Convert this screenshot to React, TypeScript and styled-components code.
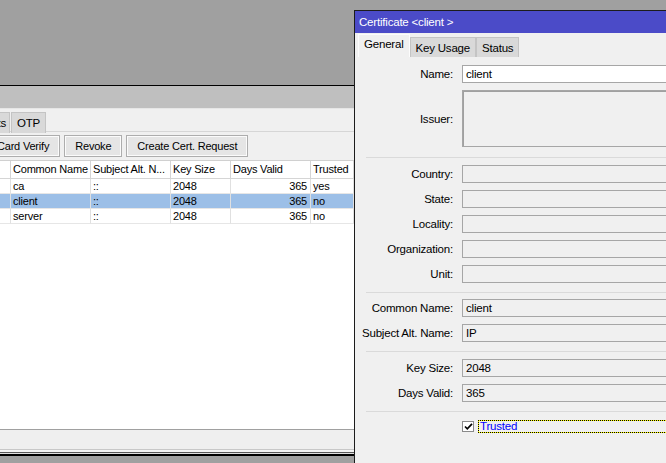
import styled, { createGlobalStyle } from "styled-components";

const GlobalStyle = createGlobalStyle`
  html, body {
    margin: 0;
    padding: 0;
  }
  body {
    background: #a0a0a0;
    font-family: "Liberation Sans", Arial, sans-serif;
    font-size: 11px;
    letter-spacing: -0.2px;
    color: #000;
  }
`;

const rows = [
  { name: "ca", alt: "::", size: "2048", days: "365", trusted: "yes" },
  { name: "client", alt: "::", size: "2048", days: "365", trusted: "no", selected: true },
  { name: "server", alt: "::", size: "2048", days: "365", trusted: "no" },
];

const columns = ["", "Common Name", "Subject Alt. N...", "Key Size", "Days Valid", "Trusted"];

export default function App() {
  return (
    <>
      <GlobalStyle />
      <Desktop>
        <BackWindow>
          <TitleBand />
          <TabStrip>
            <BackTab $cut>SCEP RA Requests</BackTab>
            <BackTab>OTP</BackTab>
          </TabStrip>
          <Toolbar>
            <Button $cut>Card Verify</Button>
            <Button>Revoke</Button>
            <Button>Create Cert. Request</Button>
          </Toolbar>
          <TableArea>
            <Grid>
              {columns.map((c, i) => (
                <HeadCell key={i}>{c}</HeadCell>
              ))}
              {rows.map((r) => (
                <Row key={r.name} $selected={!!r.selected}>
                  <Cell />
                  <Cell>{r.name}</Cell>
                  <Cell>{r.alt}</Cell>
                  <Cell>{r.size}</Cell>
                  <Cell $right>{r.days}</Cell>
                  <Cell>{r.trusted}</Cell>
                </Row>
              ))}
            </Grid>
          </TableArea>
          <StatusBar />
          <FrameBottom />
        </BackWindow>

        <Dialog>
          <DialogTitle>Certificate &lt;client &gt;</DialogTitle>
          <DialogTabs>
            <DialogTab $active>General</DialogTab>
            <DialogTab>Key Usage</DialogTab>
            <DialogTab>Status</DialogTab>
          </DialogTabs>
          <Body>
            <Section $pt={8} $pb={10}>
              <FormRow>
                <Label>Name:</Label>
                <Field $white>client</Field>
              </FormRow>
              <FormRow>
                <Label>Issuer:</Label>
                <AreaField />
              </FormRow>
            </Section>
            <Separator />
            <Section $pt={7} $pb={9}>
              {["Country:", "State:", "Locality:", "Organization:", "Unit:"].map((l) => (
                <FormRow key={l}>
                  <Label>{l}</Label>
                  <Field />
                </FormRow>
              ))}
            </Section>
            <Separator />
            <Section $pt={6} $pb={9}>
              <FormRow>
                <Label>Common Name:</Label>
                <Field>client</Field>
              </FormRow>
              <FormRow>
                <Label>Subject Alt. Name:</Label>
                <Field>IP</Field>
              </FormRow>
            </Section>
            <Separator />
            <Section $pt={7} $pb={9}>
              <FormRow>
                <Label>Key Size:</Label>
                <Field>2048</Field>
              </FormRow>
              <FormRow>
                <Label>Days Valid:</Label>
                <Field>365</Field>
              </FormRow>
            </Section>
            <Separator />
            <Section $pt={8} $pb={9}>
              <FormRow>
                <span />
                <CheckLine>
                  <CheckBox>
                    <svg width="9" height="9" viewBox="0 0 9 9">
                      <path d="M1 4.5 L3.3 6.8 L8 1.8" fill="none" stroke="#000" strokeWidth="1.7" />
                    </svg>
                  </CheckBox>
                  <FocusLabel>Trusted</FocusLabel>
                </CheckLine>
              </FormRow>
            </Section>
          </Body>
        </Dialog>
      </Desktop>
    </>
  );
}

const Desktop = styled.div`
  position: relative;
  width: 666px;
  height: 463px;
  overflow: hidden;
  background: #a0a0a0;
`;

/* windows on the desktop */
const BackWindow = styled.div`
  position: absolute;
  left: 0;
  top: 85px;
  width: 354px;
  height: 371px;
  display: flex;
  flex-direction: column;
  background: #f0f0f0;
  border-top: 1px solid #000;
  box-sizing: border-box;
  overflow: hidden;
`;

const TitleBand = styled.div`
  height: 22px;
  flex-shrink: 0;
  background: #bfbfbf;
`;

const TabStrip = styled.div`
  height: 24px;
  flex-shrink: 0;
  box-sizing: border-box;
  padding-top: 3px;
  display: flex;
  gap: 1px;
  border-top: 1px solid #e6e6e6;
  border-bottom: 1px solid #d6d6d6;
`;

const BackTab = styled.div<{ $cut?: boolean }>`
  height: 21px;
  flex-shrink: 0;
  box-sizing: border-box;
  background: #d9d9d9;
  border: 1px solid #c4c4c4;
  border-bottom: none;
  padding: 0 5px;
  line-height: 20px;
  font-size: 11.5px;
  white-space: nowrap;
  overflow: hidden;
  ${(p) => (p.$cut ? "margin-left: -120px; width: 130px; text-align: right; padding-right: 3px;" : "")}
`;

const Toolbar = styled.div`
  height: 28px;
  flex-shrink: 0;
  box-sizing: border-box;
  padding-top: 3px;
  display: flex;
  gap: 4px;
`;

const Button = styled.div<{ $cut?: boolean }>`
  height: 22px;
  box-sizing: border-box;
  padding: 0 10px;
  border: 1px solid #adadad;
  box-shadow: inset 0 0 0 1px #fbfbfb;
  background: #e5e5e5;
  line-height: 20px;
  white-space: nowrap;
  ${(p) => (p.$cut ? "margin-left: -14px;" : "")}
`;

const TableArea = styled.div`
  flex: 1;
  background: #fff;
  border-top: 1px solid #d0d0d0;
`;

const Grid = styled.div`
  display: grid;
  grid-template-columns: 11px 80px 80px 60px 80px 43px;
`;

const HeadCell = styled.div`
  height: 18px;
  box-sizing: border-box;
  padding-left: 2px;
  border-right: 1px solid #d5d5d5;
  border-bottom: 1px solid #d5d5d5;
  line-height: 17px;
  white-space: nowrap;
  overflow: hidden;
`;

const Row = styled.div<{ $selected: boolean }>`
  display: contents;
  & > div {
    background: ${(p) => (p.$selected ? "#9cbfe7" : "#fff")};
  }
`;

const Cell = styled.div<{ $right?: boolean }>`
  height: 15px;
  box-sizing: border-box;
  padding: 0 3px 0 2px;
  border-right: 1px solid #e0e0e0;
  border-bottom: 1px solid #e6e6e6;
  line-height: 14px;
  text-align: ${(p) => (p.$right ? "right" : "left")};
  white-space: nowrap;
  overflow: hidden;
`;

const StatusBar = styled.div`
  height: 20px;
  flex-shrink: 0;
  box-sizing: border-box;
  border-top: 1px solid #a0a0a0;
  background: #efefef;
`;

const FrameBottom = styled.div`
  height: 7px;
  flex-shrink: 0;
  background: linear-gradient(
    #c8c8c8 0 1px,
    #f4f4f4 1px 3px,
    #5a5a5a 3px 4px,
    #e0e0e0 4px 5px,
    #000 5px 7px
  );
`;

const Dialog = styled.div`
  position: absolute;
  left: 354px;
  top: 10px;
  width: 340px;
  height: 470px;
  background: #f0f0f0;
  border-left: 1px solid #1c1c1c;
  border-top: 1px solid #1c1c1c;
  display: flex;
  flex-direction: column;
`;

const DialogTitle = styled.div`
  height: 22px;
  flex-shrink: 0;
  background: #4b4bc8;
  color: #fff;
  padding-left: 4px;
  line-height: 22px;
  font-size: 11.5px;
`;

const DialogTabs = styled.div`
  height: 24px;
  flex-shrink: 0;
  display: flex;
  align-items: flex-end;
  padding-left: 3px;
`;

const DialogTab = styled.div<{ $active?: boolean }>`
  box-sizing: border-box;
  height: ${(p) => (p.$active ? "23px" : "20px")};
  padding: 0 5px;
  background: ${(p) => (p.$active ? "#f0f0f0" : "#d9d9d9")};
  border: 1px solid ${(p) => (p.$active ? "#fcfcfc" : "#c4c4c4")};
  border-bottom: none;
  line-height: ${(p) => (p.$active ? "18px" : "20px")};
  white-space: nowrap;
  font-size: 11.5px;
`;

const Body = styled.div`
  flex: 1;
  display: flex;
  flex-direction: column;
`;

const Section = styled.div<{ $pt: number; $pb: number }>`
  display: flex;
  flex-direction: column;
  gap: 7px;
  padding: ${(p) => `${p.$pt}px 0 ${p.$pb}px`};
`;

const Separator = styled.div`
  height: 1px;
  margin-left: 11px;
  background: #dadada;
`;

const FormRow = styled.div`
  display: grid;
  grid-template-columns: 98px 1fr;
  column-gap: 9px;
  align-items: center;
`;

const Label = styled.div`
  text-align: right;
  white-space: nowrap;
  font-size: 11.5px;
`;

const Field = styled.div<{ $white?: boolean }>`
  height: 18px;
  box-sizing: border-box;
  border: 1px solid #a6a6a6;
  background: ${(p) => (p.$white ? "#fff" : "#f0f0f0")};
  padding-left: 3px;
  line-height: 16px;
  font-size: 11.5px;
`;

const AreaField = styled.div`
  height: 57px;
  box-sizing: border-box;
  border: 1px solid #a6a6a6;
  box-shadow: inset 1px 1px 0 #a0a0a0;
  background: #f0f0f0;
`;

const CheckLine = styled.div`
  display: flex;
  align-items: center;
  gap: 4px;
`;

const CheckBox = styled.div`
  width: 12px;
  height: 11px;
  box-sizing: border-box;
  border: 1px solid #8a8a8a;
  background: #fff;
  display: flex;
  align-items: center;
  justify-content: center;
`;

const FocusLabel = styled.div`
  flex: 1;
  height: 13px;
  box-sizing: border-box;
  border: 1px dotted #000;
  background: linear-gradient(#f0f0f0, #f0f0f0) padding-box, #ffff00 border-box;
  color: #0000ff;
  padding-left: 1px;
  line-height: 11px;
  font-size: 11.5px;
`;
